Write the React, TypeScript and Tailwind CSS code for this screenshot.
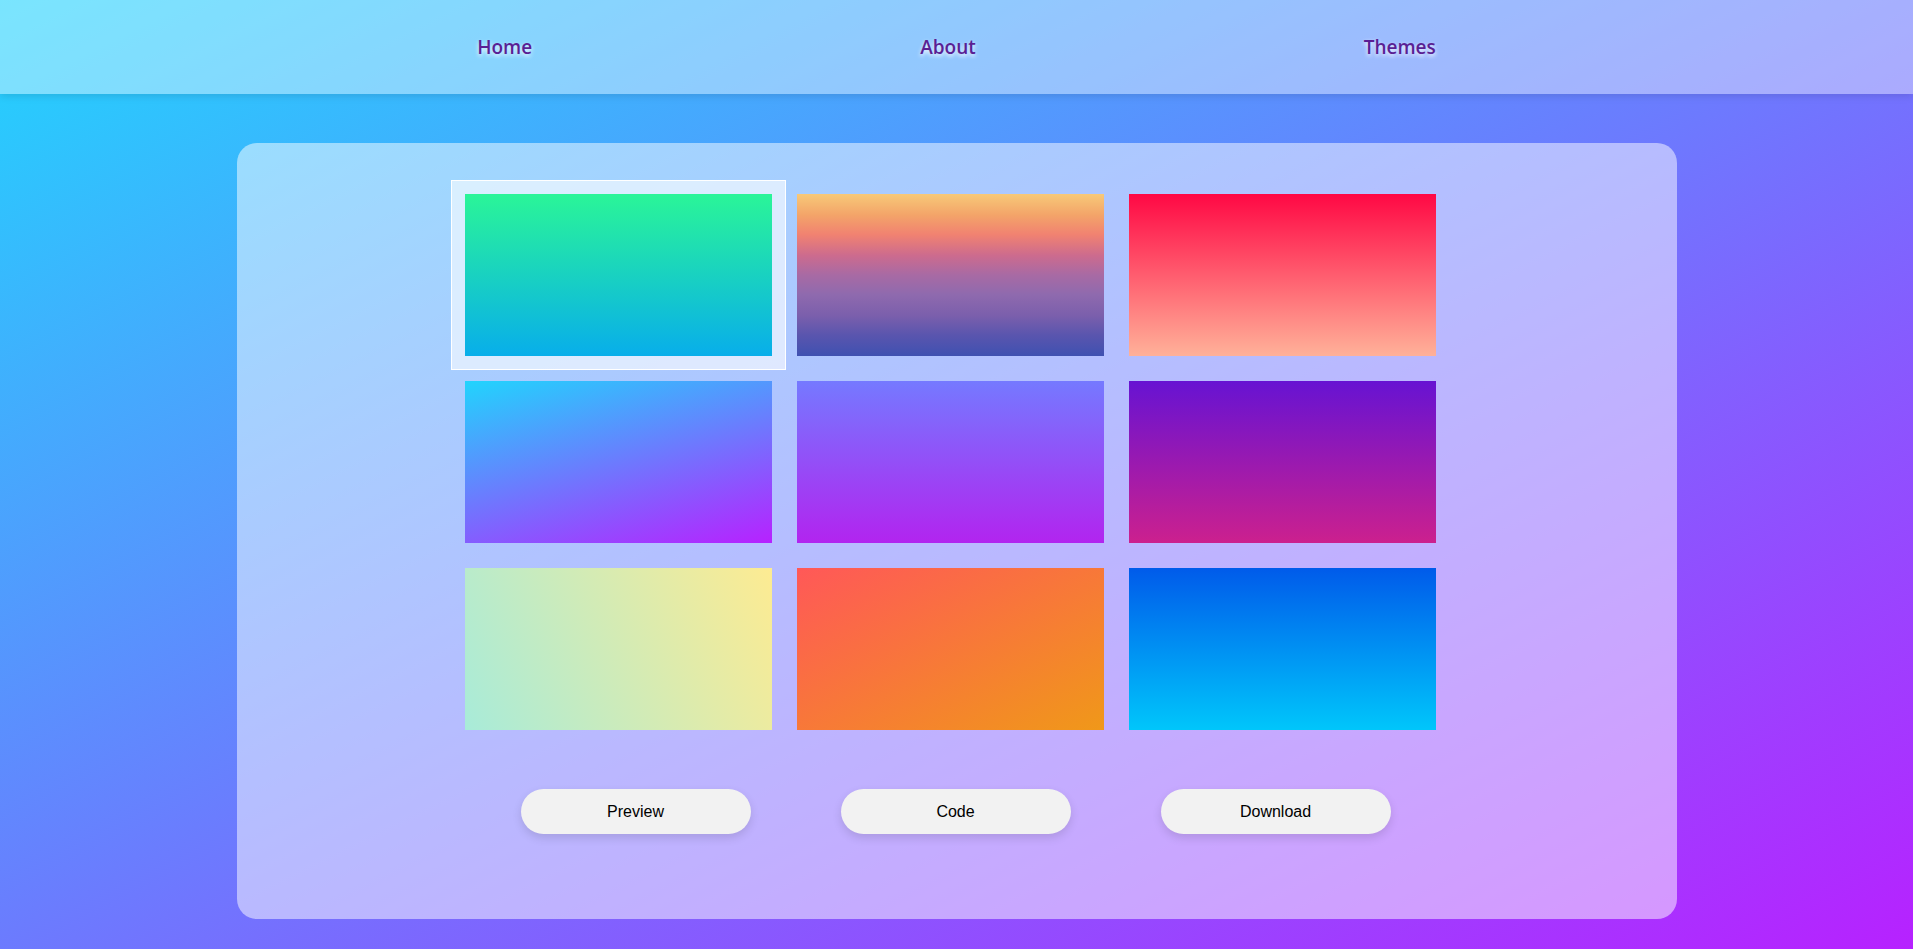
import React, { useState } from 'react';

// ============================================
// Data
// ============================================

const NAV_ITEMS = ['Home', 'About', 'Themes'];

const GRADIENTS = [
  'bg-[linear-gradient(0deg,#08aeea_0%,#2af598_100%)]',
  'bg-[linear-gradient(to_top,#3f51b1_0%,#5a55ae_13%,#7b5fac_25%,#8f6aae_38%,#a86aa4_50%,#cc6b8e_62%,#f18271_75%,#f3a469_87%,#f7c978_100%)]',
  'bg-[linear-gradient(to_bottom,#ff0844_0%,#ffb199_100%)]',
  'bg-[linear-gradient(165deg,#21d4fd_0%,#b721ff_100%)]',
  'bg-[linear-gradient(to_bottom,#7579ff_0%,#b224ef_100%)]',
  'bg-[linear-gradient(to_bottom,#6713d2_0%,#cc208e_100%)]',
  'bg-[linear-gradient(65deg,#a8ebd9_0%,#fdeb92_100%)]',
  'bg-[linear-gradient(to_bottom_right,#ff5858_0%,#f09819_100%)]',
  'bg-[linear-gradient(to_bottom,#005bea_0%,#00c6fb_100%)]',
];

const ACTIONS = ['Preview', 'Code', 'Download'];

// ============================================
// Components
// ============================================

function Header() {
  return (
    <header className="h-[94px] bg-white/40 shadow-[0_2px_8px_rgba(0,0,0,0.12)] flex items-center justify-center">
      <nav className="flex items-center justify-center gap-[388px] pt-[1px]">
        {NAV_ITEMS.map((item) => (
          <a
            key={item}
            href="#"
            className="font-['Open_Sans',sans-serif] text-[19px] font-semibold text-[#5a1f94] [text-shadow:0_2px_4px_#ffffff]"
          >
            {item}
          </a>
        ))}
      </nav>
    </header>
  );
}

function ThemeCard({ gradient, selected, onClick }: { gradient: string; selected: boolean; onClick: () => void }) {
  return (
    <button
      onClick={onClick}
      className={`h-[162px] w-[307px] ${gradient} ${
        selected
          ? 'shadow-[0_0_0_13px_rgba(255,255,255,0.6)] outline outline-1 outline-white outline-offset-[13px]'
          : ''
      }`}
      aria-label="theme"
    />
  );
}

export default function App() {
  const [selected, setSelected] = useState(0);

  return (
    <div className="min-h-screen bg-[linear-gradient(to_bottom_right,#21d4fd,#b721ff)] font-['Liberation_Sans',Arial,sans-serif]">
      <Header />

      <main className="flex justify-center pt-[49px] pb-[30px]">
        <div className="w-[1440px] h-[776px] rounded-[20px] bg-white/50 flex flex-col items-center pt-[51px]">
          {/* Theme grid */}
          <div className="grid grid-cols-[307px_307px_307px] gap-[25px] mr-[13px]">
            {GRADIENTS.map((g, i) => (
              <ThemeCard key={i} gradient={g} selected={selected === i} onClick={() => setSelected(i)} />
            ))}
          </div>

          {/* Actions */}
          <div className="flex gap-[90px] mt-[59px] mr-[2px]">
            {ACTIONS.map((a) => (
              <button
                key={a}
                className="w-[230px] h-[45px] rounded-full bg-[#f2f2f2] text-black text-[16px] shadow-[0_4px_10px_rgba(0,0,0,0.12)]"
              >
                {a}
              </button>
            ))}
          </div>
        </div>
      </main>
    </div>
  );
}
